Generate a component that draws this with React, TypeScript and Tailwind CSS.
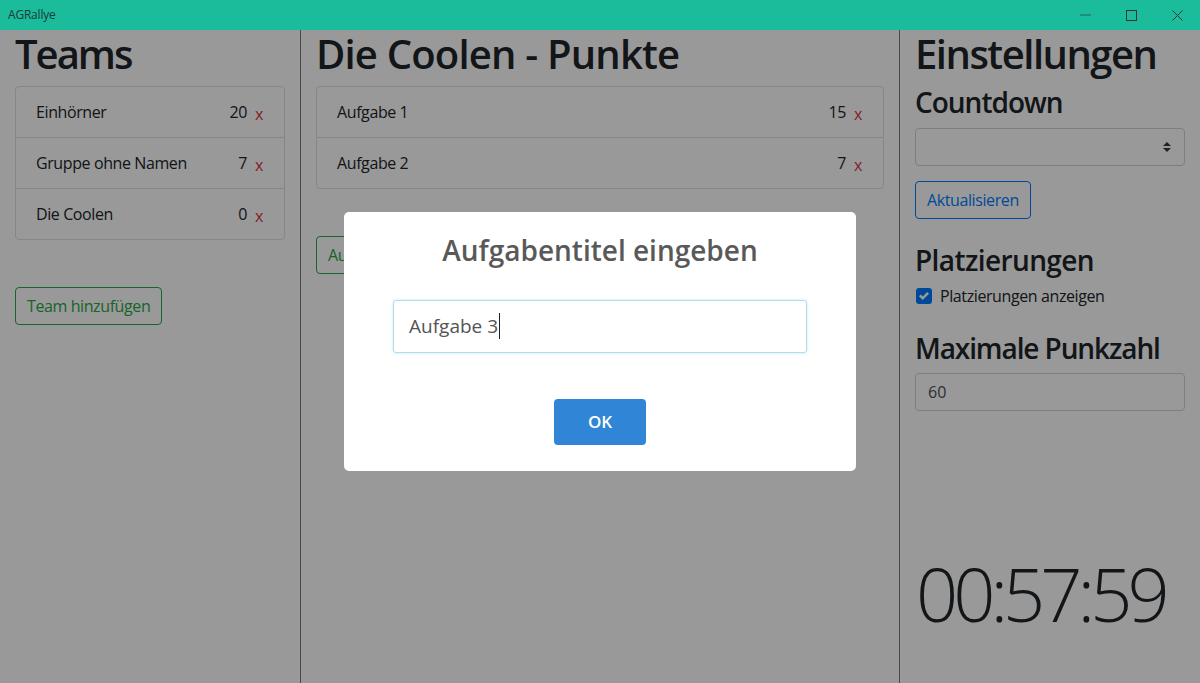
import React from "react";

function TitleBar() {
  return (
    <div className="h-[30px] shrink-0 bg-[#1abc9c] flex items-center">
      <span className="ml-[8px] text-[12px] text-[#1d3b35] tracking-[-0.2px] font-['Open_Sans',sans-serif]">AGRallye</span>
      <div className="ml-auto flex h-full">
        <div className="w-[46px] h-full flex items-center justify-center">
          <svg width="11" height="11" viewBox="0 0 11 11">
            <line x1="0" y1="5" x2="11" y2="5" stroke="#2a5e54" strokeWidth="1" />
          </svg>
        </div>
        <div className="w-[46px] h-full flex items-center justify-center">
          <svg width="11" height="11" viewBox="0 0 11 11">
            <rect x="0.5" y="0.5" width="10" height="10" fill="none" stroke="#333" strokeWidth="1" />
          </svg>
        </div>
        <div className="w-[46px] h-full flex items-center justify-center">
          <svg width="11" height="11" viewBox="0 0 11 11">
            <path d="M0.5 0.5 L10.5 10.5 M10.5 0.5 L0.5 10.5" stroke="#333" strokeWidth="1" />
          </svg>
        </div>
      </div>
    </div>
  );
}

type Item = { name: string; pts: number };

function ListGroup({ items }: { items: Item[] }) {
  return (
    <div className="border border-[#dfdfdf] rounded-[4px]">
      {items.map((it, i) => (
        <div
          key={it.name}
          className={
            "flex items-center pl-[20px] pr-[21px] text-[16px] tracking-[-0.4px] text-[#212529] " +
            (i > 0 ? "h-[51px] border-t border-[#dfdfdf]" : "h-[50px]")
          }
        >
          <span className="flex-1">{it.name}</span>
          <span>{it.pts}</span>
          <span className="ml-[8px] text-[#dc3545] translate-y-[2px]">x</span>
        </div>
      ))}
    </div>
  );
}

export default function App() {
  return (
    <div className="w-[1200px] h-[683px] flex flex-col overflow-hidden bg-white font-['Open_Sans','Noto_Sans',sans-serif] text-[#212529]">
      <TitleBar />
      <div className="relative flex-1 flex min-h-0">
        {/* Left column */}
        <div className="w-[301px] shrink-0 border-r border-[#7c7c7c] px-[15px]">
          <h1 className="text-[40px] font-semibold leading-[1.2] mb-[8px] tracking-[-2px]">Teams</h1>
          <ListGroup
            items={[
              { name: "Einhörner", pts: 20 },
              { name: "Gruppe ohne Namen", pts: 7 },
              { name: "Die Coolen", pts: 0 },
            ]}
          />
          <div className="mt-[47px]">
            <button className="h-[38px] px-[11px] border border-[#28a745] text-[#28a745] rounded-[4px] text-[16px] tracking-[-0.4px]">
              Team hinzufügen
            </button>
          </div>
        </div>

        {/* Middle column */}
        <div className="w-[599px] shrink-0 border-r border-[#7c7c7c] px-[15px]">
          <h1 className="text-[40px] font-semibold leading-[1.2] mb-[8px] tracking-[-0.8px]">Die Coolen - Punkte</h1>
          <ListGroup
            items={[
              { name: "Aufgabe 1", pts: 15 },
              { name: "Aufgabe 2", pts: 7 },
            ]}
          />
          <div className="mt-[47px]">
            <button className="h-[38px] px-[11px] border border-[#28a745] text-[#28a745] rounded-[4px] text-[16px] tracking-[-0.4px]">
              Aufgabe hinzufügen
            </button>
          </div>
        </div>

        {/* Right column */}
        <div className="flex-1 px-[15px] flex flex-col">
          <h1 className="text-[40px] font-semibold leading-[1.2] mb-[8px] tracking-[-1.5px]">Einstellungen</h1>
          <h3 className="text-[28px] font-semibold leading-[1.2] mb-[8px] tracking-[-1px]">Countdown</h3>
          <div className="h-[38px] border border-[#ced4da] rounded-[4px] flex items-center justify-end pr-[13px]">
            <svg width="8" height="10" viewBox="0 0 8 10">
              <path d="M4 0 L8 4 L0 4 Z" fill="#343a40" />
              <path d="M4 10 L8 6 L0 6 Z" fill="#343a40" />
            </svg>
          </div>
          <div className="mt-[15px]">
            <button className="h-[38px] px-[11px] border border-[#007bff] text-[#007bff] rounded-[4px] text-[16px] tracking-[-0.4px]">
              Aktualisieren
            </button>
          </div>
          <h3 className="mt-[25px] text-[28px] font-semibold leading-[1.2] mb-[7px] tracking-[-0.6px]">Platzierungen</h3>
          <div className="flex items-center h-[24px] text-[16px] tracking-[-0.4px]">
            <div className="w-[16px] h-[16px] ml-[1px] rounded-[3px] bg-[#007bff] flex items-center justify-center">
              <svg width="10" height="10" viewBox="0 0 8 8">
                <path d="M6.564.75l-3.59 3.612-1.538-1.55L0 4.26 2.974 7.25 8 2.193z" fill="#fff" />
              </svg>
            </div>
            <span className="ml-[8px]">Platzierungen anzeigen</span>
          </div>
          <h3 className="mt-[24px] text-[28px] font-semibold leading-[1.2] mb-[7px] tracking-[-1.1px]">Maximale Punkzahl</h3>
          <div className="h-[38px] border border-[#ced4da] rounded-[4px] flex items-center pl-[12px] text-[16px] text-[#495057]">
            60
          </div>
          <div className="mt-auto mb-[52px] text-[74px] font-light leading-none tracking-[-5px] ml-[1px]">
            00:57:59
          </div>
        </div>

        {/* Overlay */}
        <div className="absolute inset-0 bg-black/40"></div>

        {/* Modal */}
        <div className="absolute left-[344px] top-[182px] w-[512px] h-[259px] bg-white rounded-[5px] flex flex-col items-center">
          <h2 className="mt-[22px] text-[28px] font-semibold leading-[1.2] text-[#595959]">Aufgabentitel eingeben</h2>
          <div className="mt-[32px] w-[414px] h-[53px] border border-[#b4dbed] rounded-[3px] shadow-[0_0_3px_#c4e6f5] flex items-center pl-[15px] text-[19px] text-[#545454]">
            <span>Aufgabe 3</span>
            <span className="inline-block w-[1px] h-[26px] bg-[#222] ml-[1px]"></span>
          </div>
          <button className="mt-[46px] w-[92px] h-[46px] bg-[#3085d6] rounded-[4px] text-white text-[17px] font-semibold">
            OK
          </button>
        </div>
      </div>
    </div>
  );
}
